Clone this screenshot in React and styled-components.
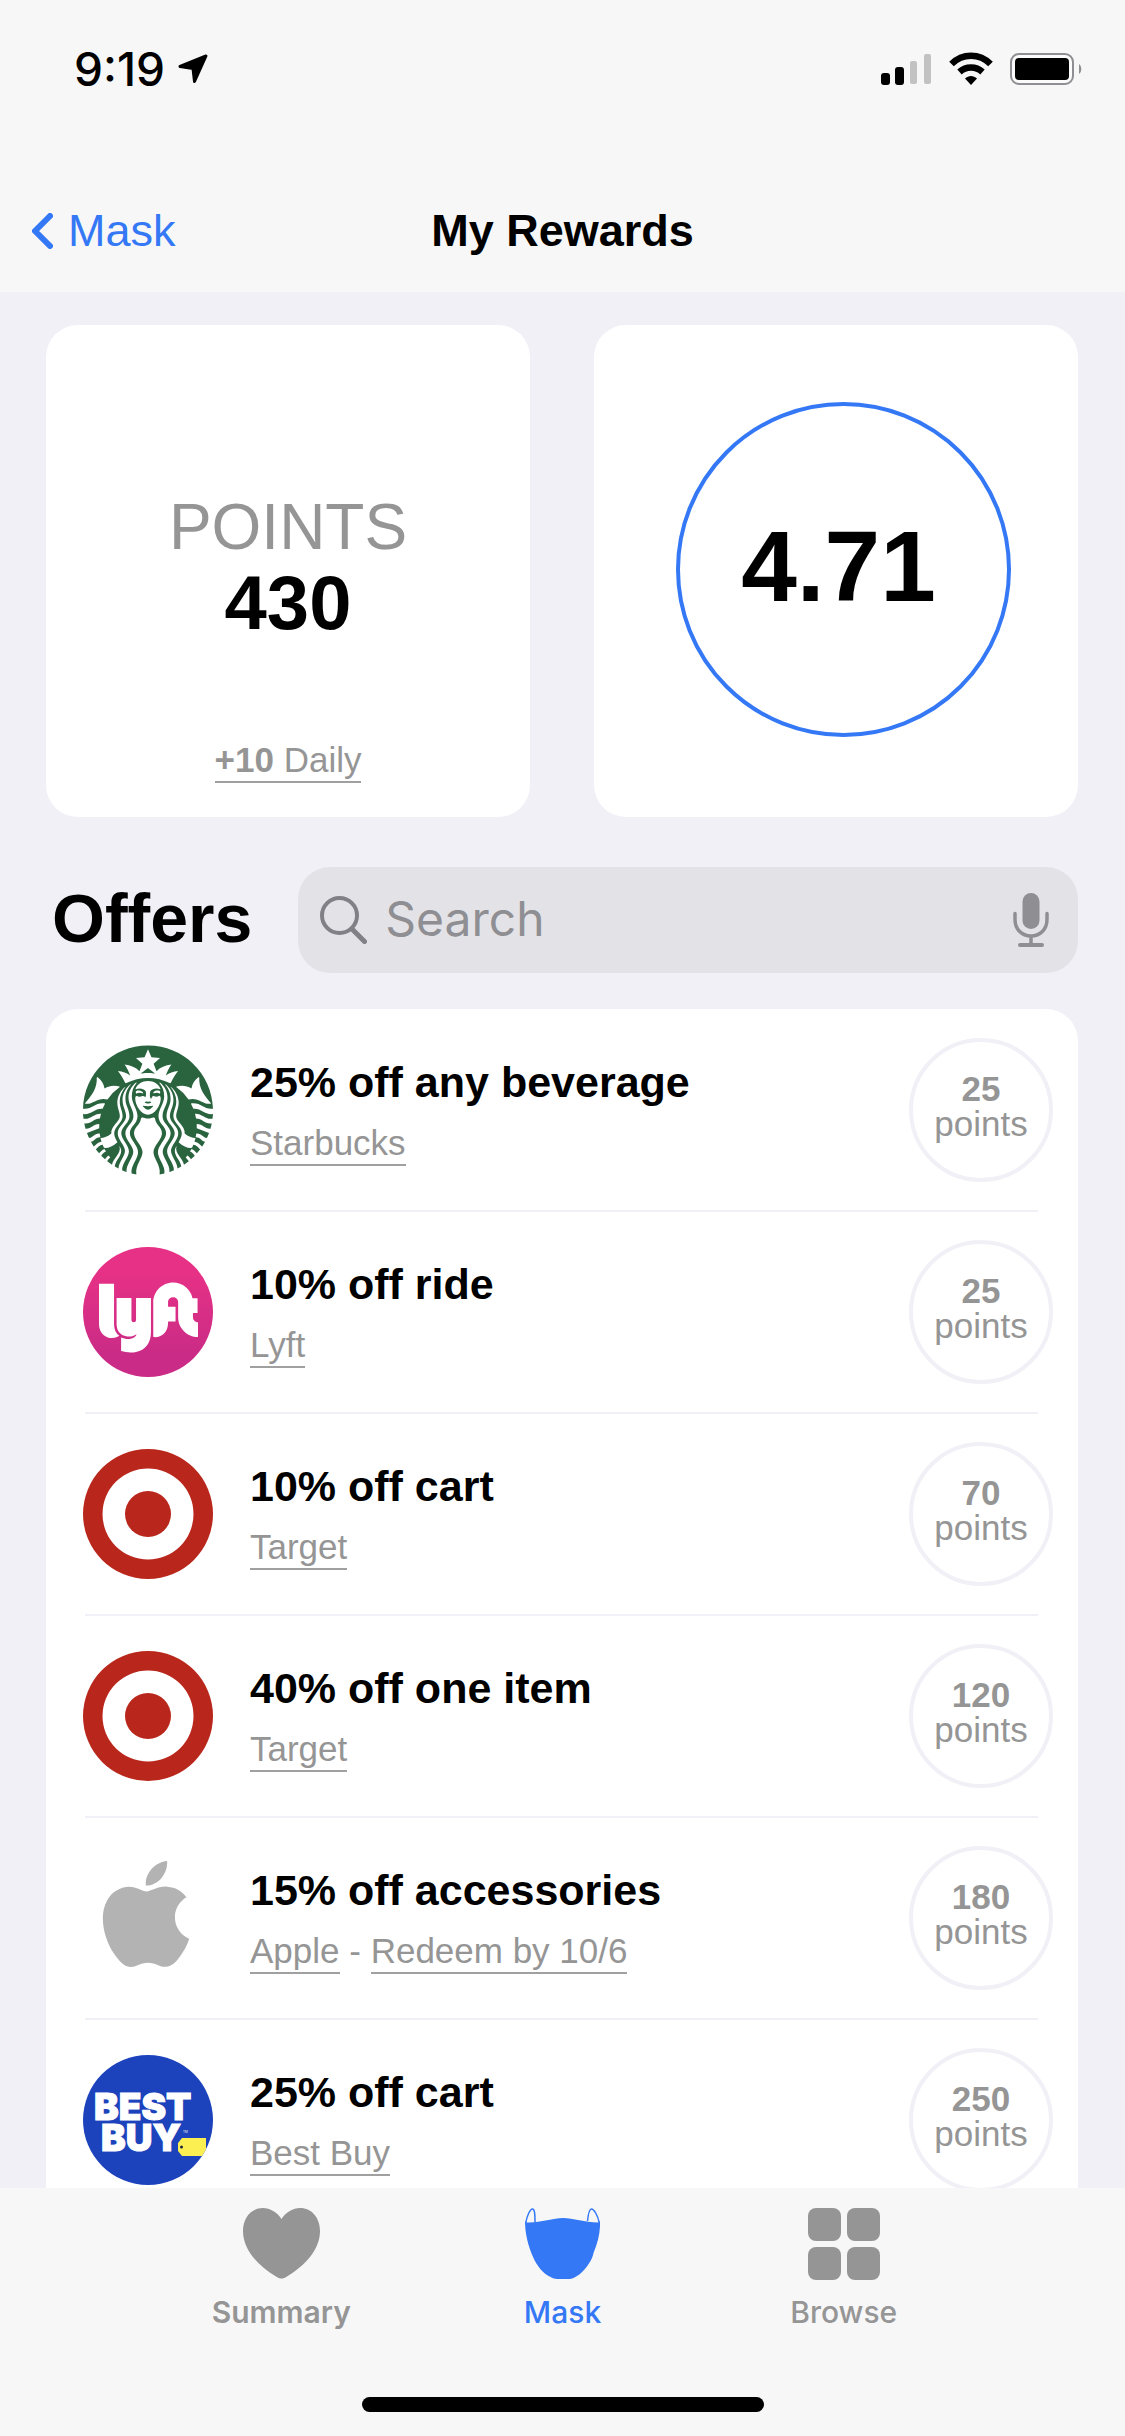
import React, { useState } from "react";
import styled, { createGlobalStyle } from "styled-components";
import { SiStarbucks, SiApple } from "react-icons/si";
import { FaLyft } from "react-icons/fa";

const GlobalStyle = createGlobalStyle`
  * {
    box-sizing: border-box;
  }
  body {
    margin: 0;
    background: #f1f0f6;
    font-family: "Liberation Sans", Arial, Helvetica, sans-serif;
    color: #000000;
  }
`

const Screen = styled.div`
  display: flex;
  flex-direction: column;
  height: 100vh;
`

const Header = styled.header`
  background: #f7f7f7;
`

const StatusBar = styled.div`
  display: flex;
  justify-content: space-between;
  align-items: center;
  height: 138px;
  padding: 0 43px 0 74px;
`

const StatusGroup = styled.div`
  display: flex;
  align-items: center;
  gap: ${props => props.$gap}px;
`

const Time = styled.span`
  font-family: Inter, sans-serif;
  font-size: 46px;
  font-weight: 500;
`

const NavBar = styled.nav`
  display: grid;
  grid-template-columns: 1fr auto 1fr;
  align-items: center;
  height: 122px;
  margin-top: 32px;
  padding: 0 32px;
`

const BackLink = styled.a`
  display: flex;
  align-items: center;
  gap: 15px;
  color: #3478f6;
  font-size: 45px;
  text-decoration: none;
`

const Title = styled.h1`
  margin: 0;
  font-size: 45px;
  font-weight: bold;
`

const Main = styled.main`
  flex: 1;
  min-height: 0;
  overflow-y: auto;
  scrollbar-width: none;
  padding: 33px 47px 0 46px;
`

const Cards = styled.section`
  display: grid;
  grid-template-columns: 1fr 1fr;
  gap: 64px;
`

const Card = styled.div`
  display: flex;
  flex-direction: column;
  align-items: center;
  height: 492px;
  background: #ffffff;
  border-radius: 32px;
`

const PointsCard = styled(Card)`
  justify-content: flex-end;
  padding-bottom: 34px;
`

const RatingCard = styled(Card)`
  justify-content: center;
  padding: 0 0 3px 15px;
`

const PointsLabel = styled.div`
  font-size: 64px;
  line-height: 72px;
  color: #959595;
`

const PointsValue = styled.div`
  margin-bottom: 95px;
  font-size: 76px;
  line-height: 80px;
  font-weight: bold;
`

const TextLink = styled.a`
  display: inline-block;
  border-bottom: 2px solid #a0a0a0;
  font-size: 35px;
  line-height: 43px;
  color: #959595;
  text-decoration: none;
`

const Rating = styled.div`
  display: flex;
  align-items: center;
  justify-content: center;
  width: 335px;
  height: 335px;
  padding: 0 10px 6px 0;
  border: 4px solid #3478f6;
  border-radius: 50%;
  font-size: 100px;
  font-weight: bold;
`

const OffersBar = styled.div`
  display: flex;
  align-items: center;
  gap: 46px;
  margin: 50px 0 36px;
  padding-left: 6px;
`

const OffersTitle = styled.h2`
  margin: 0;
  padding-bottom: 5px;
  font-size: 68px;
  font-weight: bold;
`

const SearchBox = styled.label`
  display: flex;
  flex: 1;
  align-items: center;
  gap: 18px;
  height: 106px;
  min-width: 0;
  padding: 0 29px 0 22px;
  background: #e3e3e7;
  border-radius: 32px;
`

const SearchInput = styled.input`
  flex: 1;
  min-width: 0;
  padding: 0 0 4px;
  border: none;
  outline: none;
  background: transparent;
  font-family: Inter, sans-serif;
  font-size: 48px;
  &::placeholder {
    color: #8e8e93;
    opacity: 1;
  }
`

const IconButton = styled.button`
  display: flex;
  padding: 0;
  border: none;
  background: none;
`

const List = styled.ul`
  margin: 0;
  padding: 1px 0 0;
  list-style: none;
  background: #ffffff;
  border-radius: 32px;
`

const Row = styled.li`
  display: flex;
  align-items: center;
  gap: 37px;
  height: 200px;
  padding: 0 25px 0 37px;
`

const Divider = styled.li`
  height: 2px;
  margin: 0 40px 0 39px;
  background: #f1f0f6;
`

const OfferText = styled.div`
  flex: 1;
`

const OfferTitle = styled.h3`
  margin: 0 0 11px;
  font-size: 43px;
  line-height: 56px;
  font-weight: bold;
`

const OfferSub = styled.div`
  font-size: 35px;
  line-height: 43px;
  color: #959595;
`

const Badge = styled.div`
  display: flex;
  flex-direction: column;
  align-items: center;
  justify-content: center;
  width: 144px;
  height: 144px;
  padding-bottom: 8px;
  border: 4px solid #f1f0f6;
  border-radius: 50%;
  font-size: 35px;
  line-height: 35px;
  color: #959595;
`

const TabBar = styled.footer`
  display: flex;
  flex-direction: column;
  height: 248px;
  background: #f7f7f8;
`

const Tabs = styled.nav`
  display: grid;
  grid-template-columns: repeat(3, 1fr);
  padding: 20px 12.5% 0;
`

const Tab = styled.a`
  display: flex;
  flex-direction: column;
  align-items: center;
  gap: 12px;
  color: ${props => (props.$active ? "#3478f6" : "#959595")};
  font-family: Inter, sans-serif;
  font-size: 30px;
  line-height: 40px;
  font-weight: ${props => (props.$strong ? 600 : 500)};
  text-decoration: none;
`

const HomeIndicator = styled.div`
  width: 402px;
  height: 15px;
  margin: auto auto 24px;
  background: #000000;
  border-radius: 8px;
`

const StarbucksLogo = () => (
    <svg width="130" height="130" viewBox="0 0 130 130">
        <SiStarbucks size={130} color="#29643f" />
    </svg>
)

const LyftLogo = () => (
    <svg width="130" height="130" viewBox="0 0 130 130">
        <defs>
            <linearGradient id="lyft" x1="0" y1="0" x2="0" y2="1">
                <stop offset="0.2" stopColor="#e63186" />
                <stop offset="0.85" stopColor="#c92b86" />
            </linearGradient>
        </defs>
        <circle cx="65" cy="65" r="65" fill="url(#lyft)" />
        <FaLyft x="16" y="21" size={99} color="#ffffff" />
    </svg>
)

const TargetLogo = () => (
    <svg width="130" height="130" viewBox="0 0 130 130">
        <circle cx="65" cy="65" r="65" fill="#b9261b" />
        <circle cx="65" cy="65" r="45.500" fill="#ffffff" />
        <circle cx="65" cy="65" r="23" fill="#b9261b" />
    </svg>
)

const AppleLogo = () => (
    <svg width="130" height="130" viewBox="0 0 130 130">
        <SiApple x="10" y="8" size={106} color="#b3b3b3" />
    </svg>
)

const BestBuyLogo = () => (
    <svg width="130" height="130" viewBox="0 0 130 130">
        <clipPath id="bestbuy"><circle cx="65" cy="65" r="65" /></clipPath>
        <g clipPath="url(#bestbuy)">
            <rect width="130" height="130" fill="#1c43bb" />
            <text fill="#ffffff" stroke="#ffffff" strokeWidth="1" fontFamily="Inter, sans-serif" fontWeight="900" fontSize="37">
                <tspan x="11" y="65">BEST</tspan>
                <tspan x="18" y="96">BUY</tspan>
            </text>
            <text x="100" y="78" fill="#ffffff" fontFamily="Inter, sans-serif" fontSize="3">TM</text>
            <path d="M99 83h24v18H99l-4-5v-8z" fill="#fbef51" />
            <circle cx="98.500" cy="92" r="1.500" fill="#1c2340" />
        </g>
    </svg>
)

const HeartIcon = () => (
    <svg width="77" height="72" viewBox="0 0 77 72">
        <path d="M38.500 11C34 4 27 0 20 0 8 0 0 10 0 23c0 18 14 34 33 45.500 2.500 1.500 3.500 2 5.500 2s3-.5 5.500-2C63 57 77 41 77 23 77 10 69 0 57 0 50 0 43 4 38.500 11z" fill="currentColor" />
    </svg>
)

const MaskIcon = () => (
    <svg width="75" height="72" viewBox="0 0 75 72">
        <path d="M0 13l2 1.500C15 15 28 10 38 10s22 4.500 35 4.500l2-1.500c.5 11-2 21-6.500 32-.5 3-1.500 5-3 8-4 7-9 13-16 16.500-2 1-4.500 1.500-7 1.500h-10c-3 0-5-.8-7-2C18 65.500 12 58 8.500 50 3 38 0 25 0 13z" fill="currentColor" />
        <path d="M1 14C2 8 5 1 7.500 1S10 8 10 14M74 14C73 8 69 1 66.500 1S63 8 62.500 13" fill="none" stroke="currentColor" strokeWidth="1.500" />
    </svg>
)

const BrowseIcon = () => (
    <svg width="72" height="72" viewBox="0 0 72 72" fill="currentColor">
        <rect width="33" height="33" rx="8" />
        <rect x="39" width="33" height="33" rx="8" />
        <rect y="39" width="33" height="33" rx="8" />
        <rect x="39" y="39" width="33" height="33" rx="8" />
    </svg>
)

const offers = [
    { title: "25% off any beverage", brand: "Starbucks", points: 25, Logo: StarbucksLogo },
    { title: "10% off ride", brand: "Lyft", points: 25, Logo: LyftLogo },
    { title: "10% off cart", brand: "Target", points: 70, Logo: TargetLogo },
    { title: "40% off one item", brand: "Target", points: 120, Logo: TargetLogo },
    { title: "15% off accessories", brand: "Apple", note: "Redeem by 10/6", points: 180, Logo: AppleLogo },
    { title: "25% off cart", brand: "Best Buy", points: 250, Logo: BestBuyLogo },
]

const App = () => {
    const [search, setSearch] = useState("");

    return (
        <Screen>
            <GlobalStyle />
            <Header>
                <StatusBar>
                    <StatusGroup $gap={13}>
                        <Time>9:19</Time>
                        <svg width="30" height="30" viewBox="0 0 30 30">
                            <path d="M28 2L2 12.500 15 14.500 16.500 27.500z" stroke="#000" strokeWidth="3" strokeLinejoin="round" />
                        </svg>
                    </StatusGroup>
                    <StatusGroup $gap={17}>
                        <svg width="51" height="34" viewBox="0 0 51 34">
                            <rect y="21" width="9" height="12" rx="3" />
                            <rect x="14" y="15" width="9" height="18" rx="3" />
                            <rect x="29" y="9" width="7" height="23" rx="2" fill="#c2c2c2" />
                            <rect x="43" y="2" width="7" height="30" rx="2" fill="#c2c2c2" />
                        </svg>
                        <svg width="44" height="34" viewBox="0 0 44 34">
                            <path d="M2.500 12C13.500 1 30.500 1 41.500 12M10.500 20C17 14 27 14 33.500 20" fill="none" stroke="#000" strokeWidth="6.500" />
                            <path d="M22 33l-6-6.500c3.500-3.500 8.500-3.500 12 0z" />
                        </svg>
                        <svg width="72" height="34" viewBox="0 0 72 34">
                            <rect x="1" y="2" width="62" height="30" rx="8" fill="#fbfbfb" stroke="#8e8e93" strokeWidth="2" />
                            <rect x="5" y="6" width="54" height="22" rx="4" />
                            <path d="M69 12c3 2 3 8 0 10z" fill="#8e8e93" />
                        </svg>
                    </StatusGroup>
                </StatusBar>
                <NavBar>
                    <BackLink href="#mask">
                        <svg width="21" height="36" viewBox="0 0 21 36">
                            <path d="M18 3L3 18l15 15" fill="none" stroke="currentColor" strokeWidth="6" strokeLinecap="round" strokeLinejoin="round" />
                        </svg>
                        Mask
                    </BackLink>
                    <Title>My Rewards</Title>
                </NavBar>
            </Header>
            <Main>
                <Cards>
                    <PointsCard>
                        <PointsLabel>POINTS</PointsLabel>
                        <PointsValue>430</PointsValue>
                        <TextLink href="#daily"><b>+10</b> Daily</TextLink>
                    </PointsCard>
                    <RatingCard>
                        <Rating>4.71</Rating>
                    </RatingCard>
                </Cards>
                <OffersBar>
                    <OffersTitle>Offers</OffersTitle>
                    <SearchBox>
                        <svg width="47" height="48" viewBox="0 0 47 48" fill="none" stroke="#808086" strokeLinecap="round">
                            <circle cx="19.500" cy="19.500" r="17.500" strokeWidth="4" />
                            <path d="M32 33l12.500 12.500" strokeWidth="5" />
                        </svg>
                        <SearchInput type="text" aria-label="Search" placeholder="Search" value={search} onChange={e => setSearch(e.target.value)} />
                        <IconButton type="button" aria-label="Dictate">
                            <svg width="36" height="54" viewBox="0 0 36 54" fill="none" stroke="#8e8e93" strokeLinecap="round">
                                <rect x="9.500" width="17" height="36" rx="8.500" fill="#8e8e93" stroke="none" />
                                <path d="M2 20.500v6C2 36 8.500 43 18 43s16-7 16-16.500v-6M18 43v9" strokeWidth="3.500" />
                                <path d="M7 52h22" strokeWidth="4" />
                            </svg>
                        </IconButton>
                    </SearchBox>
                </OffersBar>
                <List>
                    {offers.map(({ title, brand, note, points, Logo }, i) => (
                        <React.Fragment key={title}>
                            {i > 0 && <Divider role="separator" />}
                            <Row>
                                <Logo />
                                <OfferText>
                                    <OfferTitle>{title}</OfferTitle>
                                    <OfferSub>
                                        <TextLink href="#brand">{brand}</TextLink>
                                        {note && <> - <TextLink href="#redeem">{note}</TextLink></>}
                                    </OfferSub>
                                </OfferText>
                                <Badge>
                                    <b>{points}</b>
                                    <span>points</span>
                                </Badge>
                            </Row>
                        </React.Fragment>
                    ))}
                </List>
            </Main>
            <TabBar>
                <Tabs>
                    <Tab href="#summary" $strong><HeartIcon />Summary</Tab>
                    <Tab href="#mask" $active><MaskIcon />Mask</Tab>
                    <Tab href="#browse"><BrowseIcon />Browse</Tab>
                </Tabs>
                <HomeIndicator />
            </TabBar>
        </Screen>
    )
}

export default App;
